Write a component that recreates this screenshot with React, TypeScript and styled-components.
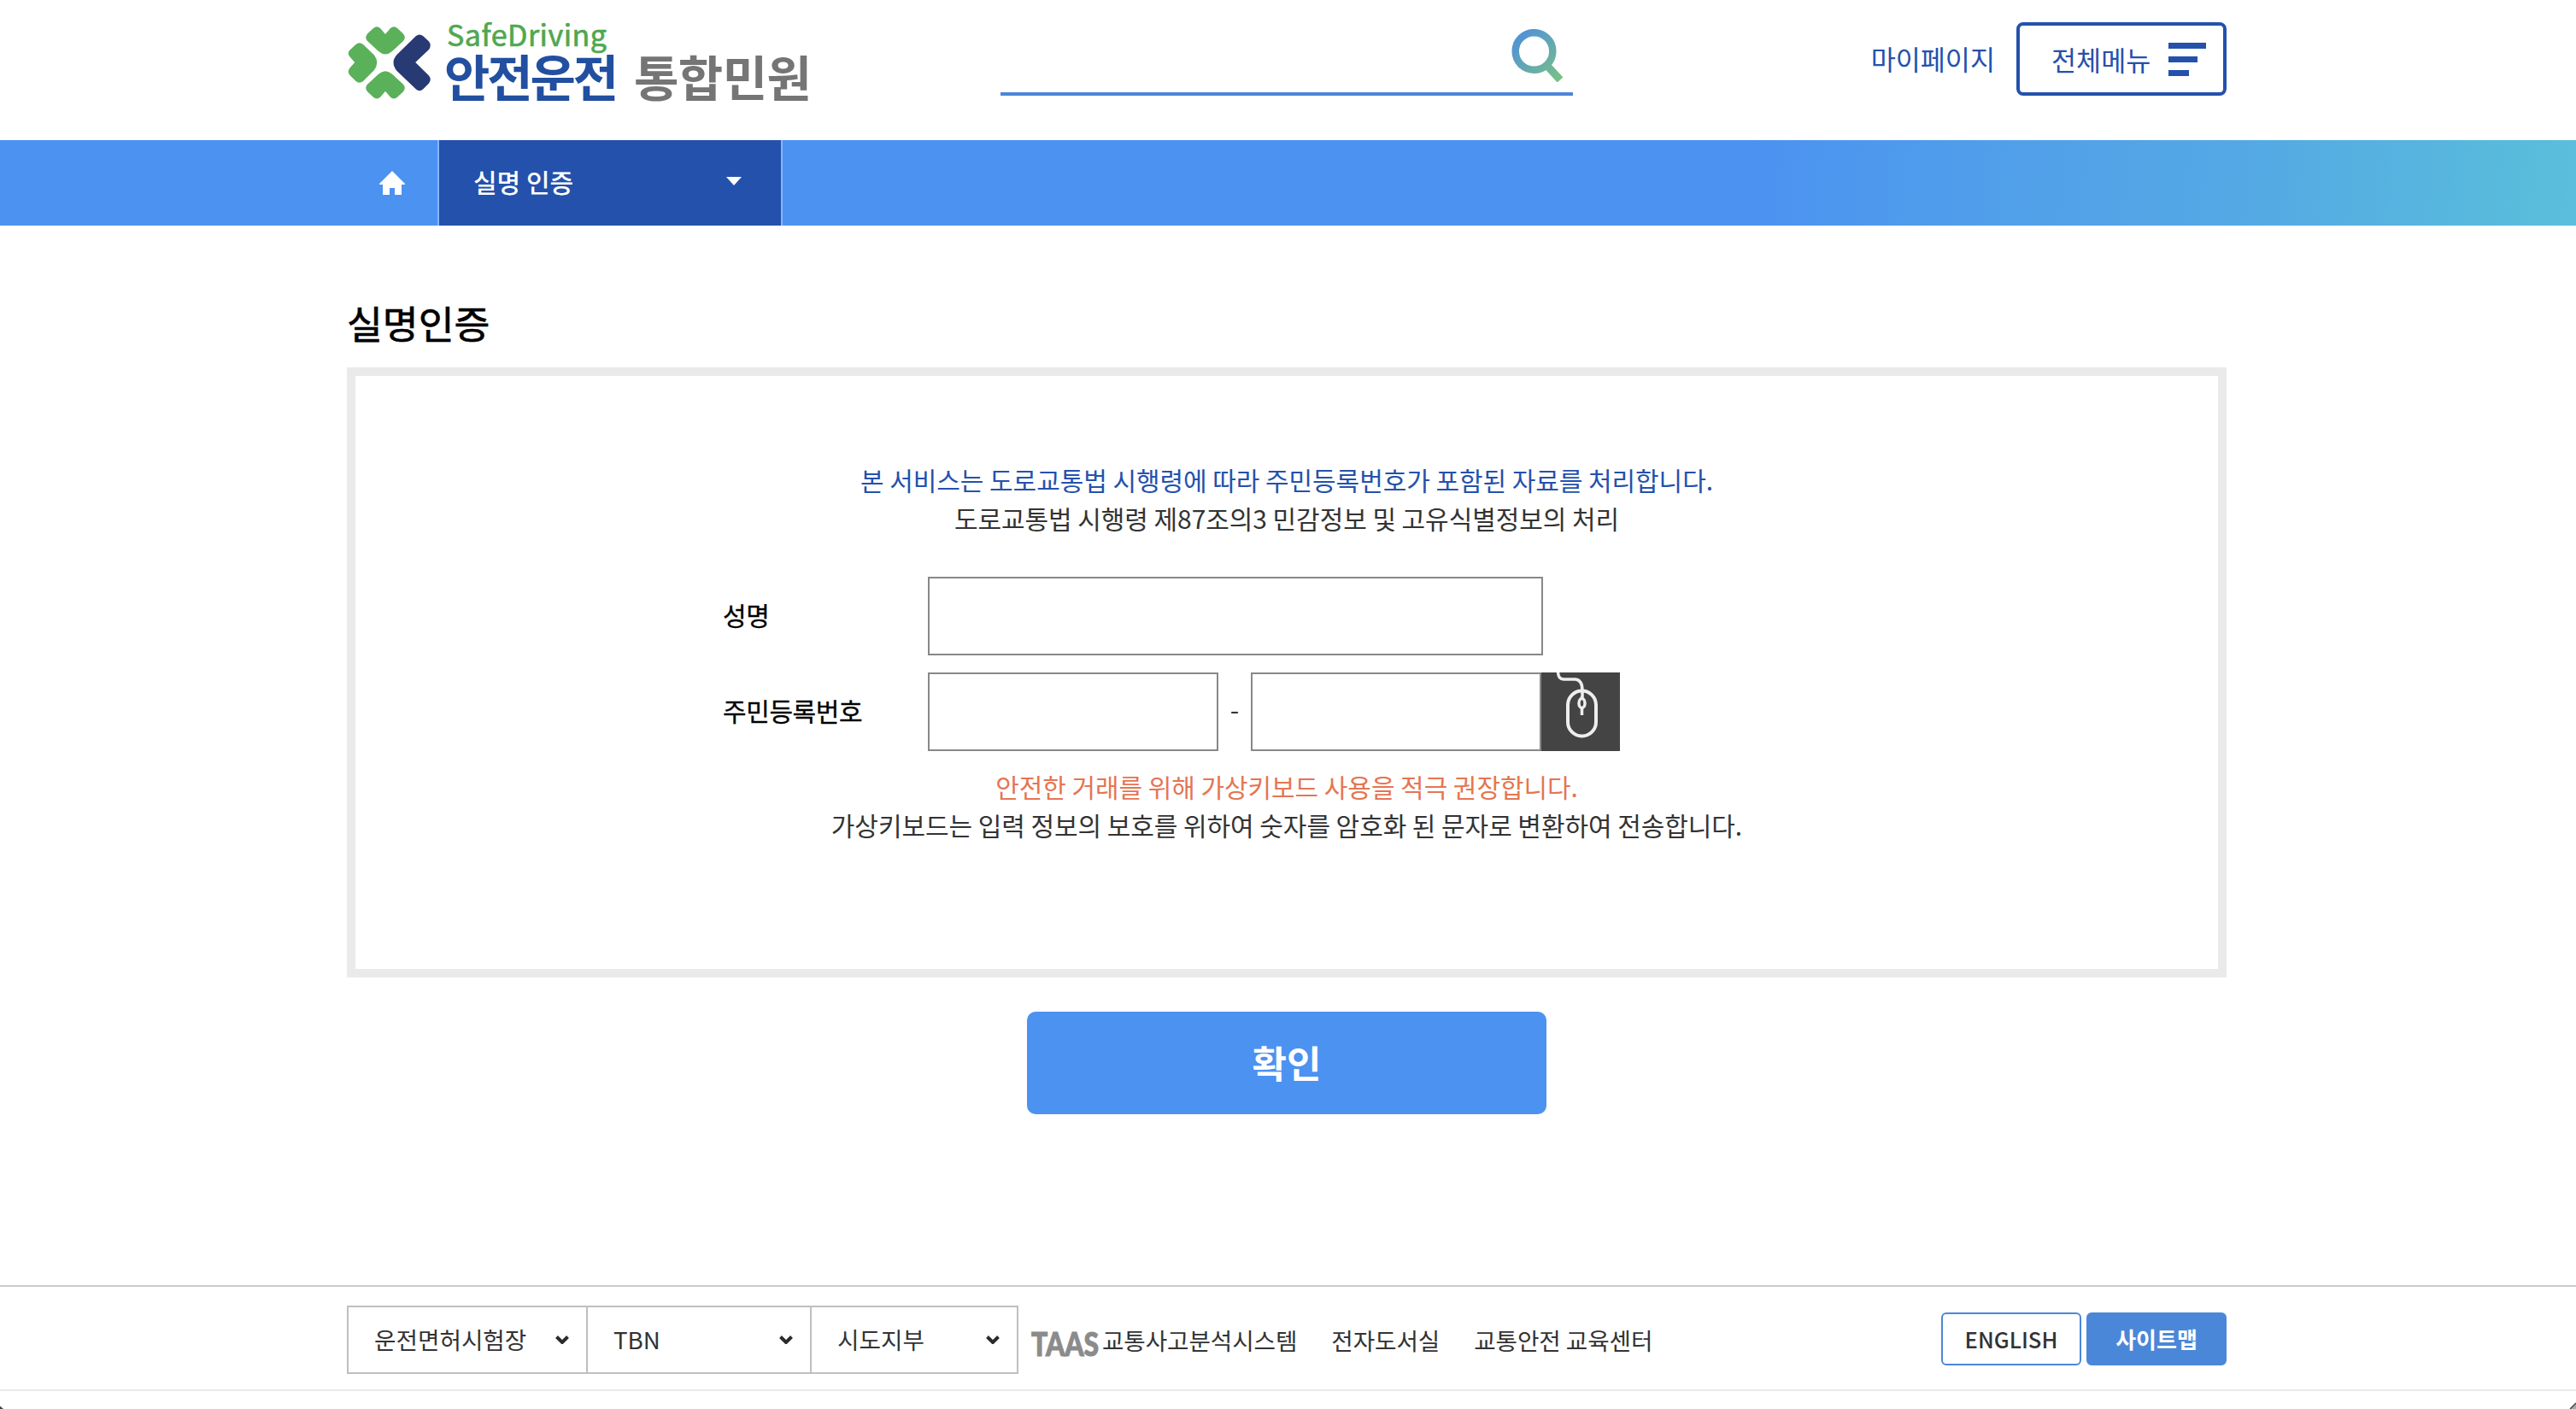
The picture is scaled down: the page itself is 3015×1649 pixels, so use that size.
import React from "react";
import styled, { createGlobalStyle } from "styled-components";

const Global = createGlobalStyle`
  * { box-sizing: border-box; }
  body { margin: 0; background: #fff; color: #333; font-family: "Noto Sans CJK KR", "Noto Sans", sans-serif; overflow: hidden; }
  input, button, select { font-family: inherit; }
`;
const Page = styled.div`width: 3015px; height: 1649px; display: flex; flex-direction: column; overflow: hidden; position: relative;`;
const Container = styled.div`width: 2200px; margin-left: 406px;`;
const Header = styled(Container)`height: 164px; display: flex; align-items: flex-start; flex: none;`;
const Logo = styled.svg`display: block; width: 560px; height: 140px; flex: none;`;
const Search = styled.div`width: 670px; height: 86px; margin: 26px 0 0 205px; border-bottom: 4px solid #4b87d8; display: flex; justify-content: flex-end; padding: 8px 12px 0 0;`;
const Links = styled.div`margin-left: auto; margin-top: 26px; display: flex; align-items: flex-start; color: #2451ac; font-size: 31.6px;`;
const MyPage = styled.a`margin-right: 25px; line-height: 85px; height: 86px;`;
const MenuButton = styled.div`width: 246px; height: 86px; border: 4px solid #2451ac; border-radius: 8px; display: flex; align-items: center; padding-left: 37px; gap: 21px; line-height: 78px;`;
const Bars = styled.div`display: flex; flex-direction: column; gap: 9px;`;
const Bar = styled.i<{ $w: number }>`display: block; height: 7px; width: ${(p) => p.$w}px; background: #2451ac;`;

const Nav = styled.nav`height: 100px; flex: none; background: linear-gradient(96deg, #4c92f1 0, #4c92f1 2040px, #509fea 2330px, #54a9e4 2620px, #57b5de 2840px, #5abfdb 3000px);`;
const NavInner = styled(Container)`display: flex; height: 100px;`;
const Home = styled.div`width: 108px; border-right: 2px solid #86b6f6; padding: 36px 0 0 38px;`;
const Crumb = styled.div`width: 402px; border-right: 2px solid #86b6f6; background: #2451ac; color: #fff; font-size: 30px; font-weight: 500; line-height: 97px; padding: 0 46px 0 40px; display: flex; justify-content: space-between;`;
const Caret = styled.i`width: 0; height: 0; margin-top: 43px; border: 9px solid transparent; border-top: 10px solid #fff; border-bottom: 0;`;

const Main = styled(Container)`flex: none; height: 1240px; display: flex; flex-direction: column; align-items: center;`;
const Title = styled.h1`align-self: flex-start; margin: 75px 0 0; height: 91px; line-height: 76px; font-size: 45.5px; font-weight: 400; -webkit-text-stroke: 0.7px #000; color: #000;`;
const Card = styled.section`width: 2200px; height: 714px; border: 10px solid #eaeaea; padding-top: 99px;`;
const Line = styled.p<{ $color?: string }>`margin: 0; text-align: center; font-size: 30px; letter-spacing: -0.06px; line-height: 45px; color: ${(p) => p.$color || "#333"};`;
const Form = styled.div`margin: 46px 0 19px 430px; display: grid; grid-template-columns: 240px auto; row-gap: 20px; font-size: 30px;`;
const Label = styled.label`line-height: 89px; color: #000; font-weight: 400; letter-spacing: -0.4px; -webkit-text-stroke: 0.3px #000;`;
const Fields = styled.div`display: flex; height: 92px;`;
const Input = styled.input<{ $w: number }>`width: ${(p) => p.$w}px; height: 92px; border: 2px solid #888; border-radius: 0; background: #fff; padding: 0 20px; outline: 0;`;
const Dash = styled.span`width: 38px; text-align: center; line-height: 85px;`;
const Submit = styled.button`margin-top: 40px; width: 608px; height: 120px; border: 0; border-radius: 10px; background: #4c92f1; color: #fff; font-size: 44px; font-weight: 700; padding: 0 0 3px;`;

const Footer = styled.footer`height: 124px; flex: none; border-top: 2px solid #ccc; border-bottom: 2px solid #eaeaea;`;
const FooterInner = styled(Container)`display: flex; align-items: flex-start; padding-top: 22px; font-size: 27.7px;`;
const Selects = styled.div`display: flex; width: 786px; height: 80px; border: 2px solid #bfbfbf;`;
const Select = styled.div<{ $w: number }>`width: ${(p) => p.$w}px; display: flex; justify-content: space-between; padding: 0 20px 0 30px; line-height: 75px; & + & { border-left: 2px solid #bfbfbf; }`;
const Chevron = styled.svg`margin-top: 33px; width: 16px; height: 10px;`;
const Sites = styled.div`display: flex; gap: 40px; line-height: 81px; margin-left: 14px; letter-spacing: -0.1px;`;
const Site = styled.a`display: flex;`;
const Taas = styled.svg`width: 82px; height: 36px; margin: 27px 2px 0 0; overflow: visible;`;
const Buttons = styled.div`margin: 8px 0 0 auto; display: flex; gap: 6px;`;
const FootButton = styled.a<{ $solid?: boolean }>`width: 164px; height: 62px; border: 2px solid #4b87d8; border-radius: 6px; text-align: center; line-height: 58px; font-size: ${(p) => (p.$solid ? 26 : 25.6)}px; font-weight: ${(p) => (p.$solid ? 700 : 500)}; background: ${(p) => (p.$solid ? "#4b87d8" : "#fff")}; color: ${(p) => (p.$solid ? "#fff" : "#333")};`;
const Corner = styled.svg<{ $side: "left" | "right" }>`position: absolute; bottom: 0; ${(p) => p.$side}: 0; width: 8px; height: 8px;`;

const LEAF = "M45 40L51 33Q55 29.5 59 33L66 39.5Q69.500 44 66 48L53 60Q45 67 37 60L24 48Q20.500 44 24 39.5L31 33Q35 29.5 39 33Z";

const ChevronIcon = () => (
  <Chevron viewBox="0 0 16 10"><path d="M1.5 1.5L8 8L14.5 1.5" fill="none" stroke="#2b2b2b" strokeWidth="4" /></Chevron>
);

export default function App() {
  return (
    <Page>
      <Global />
      <Header>
        <Logo viewBox="0 0 560 140" fontFamily="'Noto Sans CJK KR', sans-serif">
          <g fill="#5bb05a">
            <path d={LEAF} />
            <path d={LEAF} transform="translate(0 146.7) scale(1 -1)" />
            <path d="M9.200 73L3.5 66.5Q0 62.5 3.5 58.5L10.5 52Q14.700 48.5 19 52L32 64.5Q38.5 73 32 82L19 95Q14.700 98.5 10.5 95L3.5 88Q0 84 3.5 79.5Z" />
          </g>
          <path d="M80.200 73L96 58Q99.500 53 96 48.5L89 42Q85 39 81 42L58.5 64Q50.5 73 58.5 83L81 104.5Q85 108 89 104.5L96 97.500Q99.500 93 96 88.5Z" fill="#283a74" />
          <text x="117" y="54" fontSize="34" fill="#4fa850" stroke="#4fa850" strokeWidth="0.7" textLength="187">SafeDriving</text>
          <text x="114" y="112.500" fontSize="58" fill="#224f9f" fontWeight="700" textLength="204">안전운전</text>
          <text x="336" y="113" fontSize="57" fill="#757575" fontWeight="700" textLength="208">통합민원</text>
        </Logo>
        <Search>
          <svg width="60" height="62" viewBox="0 0 60 62">
            <defs><linearGradient id="lens" gradientUnits="userSpaceOnUse" x1="8" y1="8" x2="58" y2="60"><stop stopColor="#5193d6" /><stop offset="1" stopColor="#78c284" /></linearGradient></defs>
            <g fill="none" stroke="url(#lens)" strokeWidth="8.500"><circle cx="26.500" cy="26" r="21.800" /><path d="M41 42L57 59.500" strokeWidth="9" /></g>
          </svg>
        </Search>
        <Links>
          <MyPage>마이페이지</MyPage>
          <MenuButton>전체메뉴<Bars><Bar $w={44} /><Bar $w={34} /><Bar $w={24} /></Bars></MenuButton>
        </Links>
      </Header>
      <Nav>
        <NavInner>
          <Home><svg width="30" height="28" viewBox="0 0 30 28" fill="#fff"><path d="M15 0L30 15V16H26V28H18V20H12V28H4V16H0V15Z" /></svg></Home>
          <Crumb>실명 인증<Caret /></Crumb>
        </NavInner>
      </Nav>
      <Main>
        <Title>실명인증</Title>
        <Card>
          <Line $color="#2451ac">본 서비스는 도로교통법 시행령에 따라 주민등록번호가 포함된 자료를 처리합니다.</Line>
          <Line>도로교통법 시행령 제87조의3 민감정보 및 고유식별정보의 처리</Line>
          <Form>
            <Label>성명</Label>
            <Fields><Input $w={720} /></Fields>
            <Label>주민등록번호</Label>
            <Fields>
              <Input $w={340} /><Dash>-</Dash><Input $w={340} />
              <svg width="92" height="92" viewBox="0 0 92 92">
                <rect width="92" height="92" fill="#444" />
                <g fill="none" stroke="#eee" strokeWidth="4">
                  <path d="M19.500 0Q20 8 26 8H40Q48 9 48 21V29" strokeWidth="3.500" />
                  <rect x="31" y="21.500" width="33" height="53" rx="16.500" />
                  <ellipse cx="47.500" cy="36" rx="3.500" ry="5.500" strokeWidth="3.500" />
                  <path d="M47.500 28V31M47.500 42V50" strokeWidth="3.500" />
                </g>
              </svg>
            </Fields>
          </Form>
          <Line $color="#e57552">안전한 거래를 위해 가상키보드 사용을 적극 권장합니다.</Line>
          <Line>가상키보드는 입력 정보의 보호를 위하여 숫자를 암호화 된 문자로 변환하여 전송합니다.</Line>
        </Card>
        <Submit>확인</Submit>
      </Main>
      <Footer>
        <FooterInner>
          <Selects>
            <Select $w={278}>운전면허시험장<ChevronIcon /></Select>
            <Select $w={262}>TBN<ChevronIcon /></Select>
            <Select $w={242}>시도지부<ChevronIcon /></Select>
          </Selects>
          <Sites>
            <Site>
              <Taas viewBox="0 0 82 36"><text x="1" y="31.500" fontFamily="Lato, sans-serif" fontWeight="900" fontSize="38" fill="#8b8b8b" stroke="#8b8b8b" strokeWidth="1" textLength="79" lengthAdjust="spacingAndGlyphs">TAAS</text></Taas>
              교통사고분석시스템
            </Site>
            <Site>전자도서실</Site>
            <Site>교통안전 교육센터</Site>
          </Sites>
          <Buttons><FootButton>ENGLISH</FootButton><FootButton $solid>사이트맵</FootButton></Buttons>
        </FooterInner>
      </Footer>
      <Corner $side="left" viewBox="0 0 8 8"><path d="M0 4.5L4 8H0Z" fill="#444" /></Corner>
      <Corner $side="right" viewBox="0 0 8 8"><path d="M1 8L8 1V8Z" fill="#aaa" /><path d="M1 8L8 1" stroke="#444" strokeWidth="1.5" /></Corner>
    </Page>
  );
}
